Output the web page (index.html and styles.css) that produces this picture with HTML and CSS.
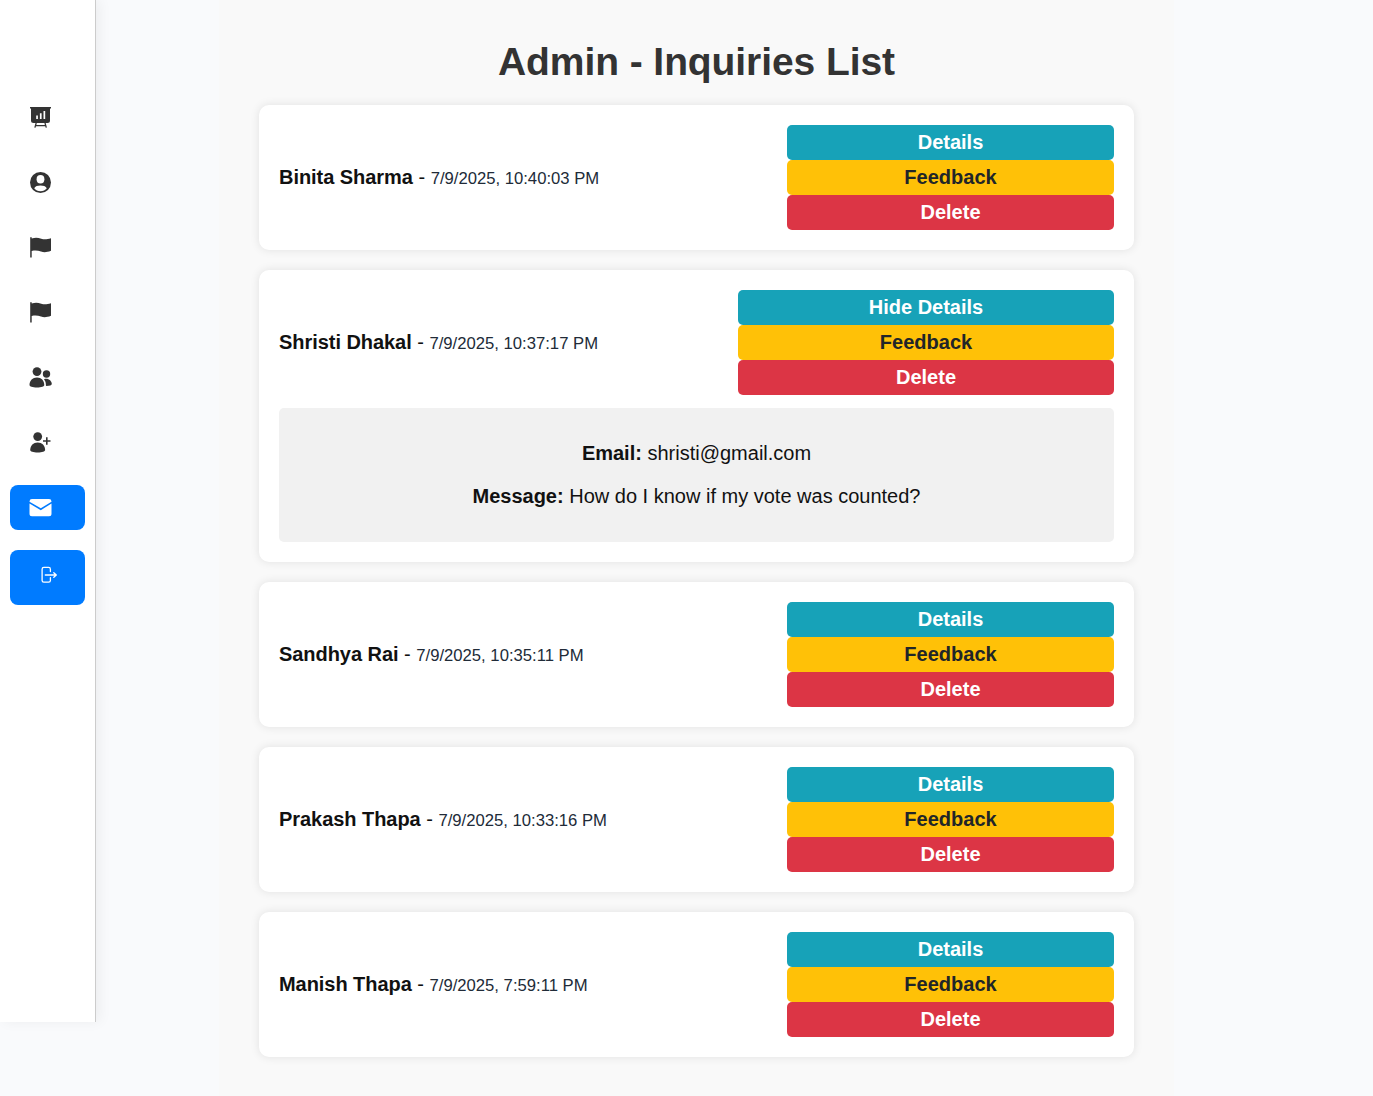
FILE: index.html
```html
<!DOCTYPE html>
<html lang="en">
<head>
<meta charset="utf-8">
<title>Admin - Inquiries List</title>
<link rel="stylesheet" href="styles.css">
</head>
<body>
<div class="layout">
  <nav class="sidebar">
    <a class="nav-item"><svg class="icon" viewBox="0 0 24 24"><path fill="currentColor" fill-rule="evenodd" d="M1 1h21v1.600h-1V14.500a2.500 2.500 0 0 1-2.500 2.500H4.500a2.500 2.500 0 0 1-2.500-2.500V2.600H1zM7.200 9.600v3.400h1.700V9.600zM10.900 7.300V13h1.700V7.300zM14.500 5V13h1.700V5z"/><path fill="none" stroke="currentColor" stroke-width="1.300" d="M7.200 17l-1.300 4.600M16 17l1.300 4.600M6.500 19.600h10.500"/></svg></a>
    <a class="nav-item"><svg class="icon" viewBox="0 0 24 24"><circle cx="11.500" cy="11.500" r="10.500" fill="currentColor"/><ellipse cx="11.500" cy="8.300" rx="3.900" ry="4.200" fill="#fff"/><path fill="#fff" d="M5.200 17.200C6.200 15.200 8.700 14.500 11.500 14.500s5.300.7 6.300 2.700c-1.500 1.900-3.600 3-6.300 3s-4.800-1.100-6.300-3z"/></svg></a>
    <a class="nav-item"><svg class="icon" viewBox="0 0 24 24"><path fill="currentColor" d="M1.200 1.300h1.500v1.100c4-1.100 6.500-.7 9.500.3 3 1 5.500.8 9.800-.4v12.500c-4.500 1.700-7 1.700-10 .8-3-1-5.500-1.400-9.300-.6v6.500H1.200z"/></svg></a>
    <a class="nav-item"><svg class="icon" viewBox="0 0 24 24"><path fill="currentColor" d="M1.200 1.300h1.500v1.100c4-1.100 6.500-.7 9.500.3 3 1 5.500.8 9.800-.4v12.500c-4.500 1.700-7 1.700-10 .8-3-1-5.500-1.400-9.300-.6v6.500H1.200z"/></svg></a>
    <a class="nav-item"><svg class="icon" viewBox="0 0 24 24"><g fill="currentColor"><circle cx="8" cy="5.600" r="4.400"/><circle cx="17.500" cy="8" r="3.700"/><path d="M.5 19c0-4.500 3.200-7.600 7.500-7.600s7.300 3.100 7.300 7.600c0 1.500-2.800 2.500-7.300 2.500S.5 20.500.5 19zM15 13.300c4-1.600 7.800 1.600 7.800 4.700 0 1.200-2 2-5.300 2-.4 0-.6 0-.6-.4 0-2.600-.4-4.500-1.900-6.300z"/></g></svg></a>
    <a class="nav-item"><svg class="icon" viewBox="0 0 24 24"><g fill="currentColor"><circle cx="8.700" cy="5.600" r="4.400"/><path d="M1.200 19c0-4.500 3.200-7.600 7.500-7.600s7.400 3.100 7.400 7.600c0 1.500-2.900 2.500-7.400 2.500S1.200 20.500 1.200 19z"/></g><path fill="none" stroke="currentColor" stroke-width="1.600" d="M14 10h7.500M17.800 6.200v7.600"/></svg></a>
    <a class="nav-item active"><svg class="icon" viewBox="0 0 24 24"><path fill="currentColor" d="M3 3h17a2.500 2.500 0 0 1 2.500 2.400v.4L11.800 12.300.5 5.800v-.4A2.500 2.500 0 0 1 3 3zM.5 7.500l11.300 6.700 10.700-6.700v10.200a2.500 2.500 0 0 1-2.500 2.500H3a2.500 2.500 0 0 1-2.500-2.500z"/></svg></a>
    <a class="nav-item active logout"><svg class="icon-small" viewBox="0 0 18 18"><path fill="none" stroke="currentColor" stroke-width="1.300" stroke-linecap="round" stroke-linejoin="round" d="M10.400 5.500V3.200A1.800 1.800 0 0 0 8.600 1.400H3.900A1.800 1.800 0 0 0 2.100 3.200v11.200a1.800 1.800 0 0 0 1.800 1.800h4.700a1.800 1.800 0 0 0 1.800-1.800v-2.700M5.300 9h10.400M13.800 6.700L16.300 9l-2.500 2.300"/></svg></a>
  </nav>
  <main class="container">
    <h1 class="title">Admin - Inquiries List</h1>
    <ul class="list">
      <li class="card">
        <div class="row"><div class="who"><strong>Binita Sharma</strong> - <span class="date">7/9/2025, 10:40:03 PM</span></div>
        <div class="actions"><button class="btn info">Details</button><button class="btn warn">Feedback</button><button class="btn danger">Delete</button></div></div>
      </li>
      <li class="card">
        <div class="row"><div class="who"><strong>Shristi Dhakal</strong> - <span class="date">7/9/2025, 10:37:17 PM</span></div>
        <div class="actions wide"><button class="btn info">Hide Details</button><button class="btn warn">Feedback</button><button class="btn danger">Delete</button></div></div>
        <div class="details"><p><strong>Email:</strong> shristi@gmail.com</p><p><strong>Message:</strong> How do I know if my vote was counted?</p></div>
      </li>
      <li class="card">
        <div class="row"><div class="who"><strong>Sandhya Rai</strong> - <span class="date">7/9/2025, 10:35:11 PM</span></div>
        <div class="actions"><button class="btn info">Details</button><button class="btn warn">Feedback</button><button class="btn danger">Delete</button></div></div>
      </li>
      <li class="card">
        <div class="row"><div class="who"><strong>Prakash Thapa</strong> - <span class="date">7/9/2025, 10:33:16 PM</span></div>
        <div class="actions"><button class="btn info">Details</button><button class="btn warn">Feedback</button><button class="btn danger">Delete</button></div></div>
      </li>
      <li class="card">
        <div class="row"><div class="who"><strong>Manish Thapa</strong> - <span class="date">7/9/2025, 7:59:11 PM</span></div>
        <div class="actions"><button class="btn info">Details</button><button class="btn warn">Feedback</button><button class="btn danger">Delete</button></div></div>
      </li>
    </ul>
  </main>
</div>
</body>
</html>
```
FILE: styles.css
```css
* { box-sizing: border-box; }
body {
  margin: 0;
  background: #f9fafc;
  color: #111;
  font: 20px/23px "Liberation Sans", Arial, sans-serif;
}
.layout { display: flex; align-items: flex-start; min-height: 1096px; }
.sidebar {
  display: flex;
  flex-direction: column;
  gap: 20px;
  flex: none;
  width: 96px;
  height: 1022px;
  padding: 95px 10px 0;
  background: #fff;
  border-right: 1px solid #ccc;
  box-shadow: 4px 0 12px rgba(0, 0, 0, .05);
}
.nav-item {
  display: flex;
  align-items: center;
  height: 45px;
  padding-left: 19px;
  border-radius: 8px;
  color: #333;
}
.nav-item.active { background: #007bff; color: #fff; }
.nav-item.logout { height: 55px; padding: 0 0 5px 30px; }
.icon { width: 24px; height: 24px; }
.icon-small { width: 18px; height: 18px; }
.container {
  flex: none;
  width: 955px;
  min-height: 1096px;
  margin-left: 123px;
  padding: 39px 40px;
  background: #f9f9f9;
}
.title {
  margin: 0 0 20px;
  font-size: 39px;
  line-height: 46px;
  letter-spacing: -.08px;
  text-align: center;
  color: #333;
}
.list { display: grid; gap: 20px; margin: 0; padding: 0; list-style: none; }
.card {
  padding: 20px;
  background: #fff;
  border-radius: 10px;
  box-shadow: 0 0 10px rgba(0, 0, 0, .1);
}
.row { display: flex; justify-content: space-between; align-items: center; }
.who strong { letter-spacing: -.05px; }
.date { font-size: 16.66px; color: #212b38; }
.actions { display: flex; flex-direction: column; width: 327px; }
.actions.wide { width: 376px; }
.btn {
  height: 35px;
  padding: 0;
  border: 0;
  border-radius: 5px;
  font: bold 20px/23px "Liberation Sans", Arial, sans-serif;
  color: #fff;
}
.info { background: #17a2b8; }
.warn { background: #ffc107; color: #212529; }
.danger { background: #dc3545; }
.details {
  margin-top: 13px;
  padding: 34px 10px;
  background: #f1f1f1;
  border-radius: 5px;
  text-align: center;
}
.details p { margin: 0; }
.details p + p { margin-top: 20px; }
```
